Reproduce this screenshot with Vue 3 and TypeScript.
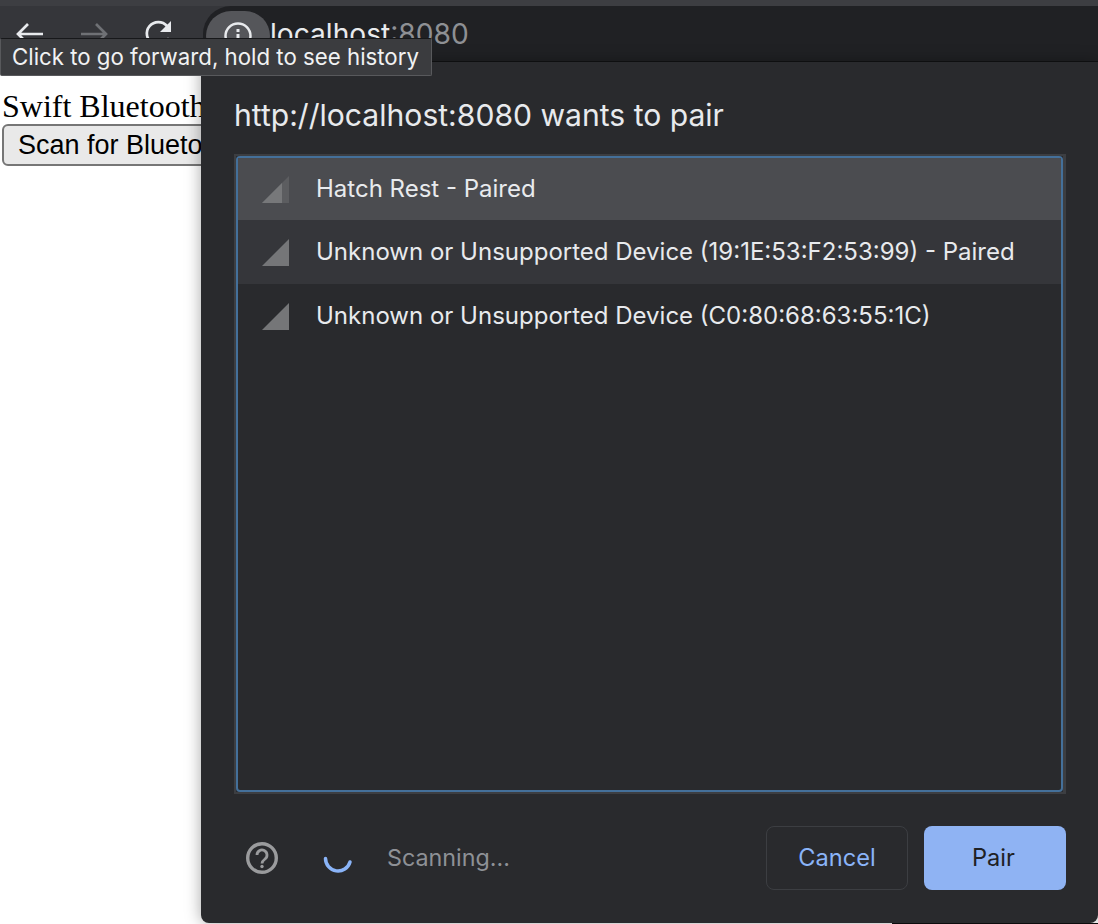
<script setup lang="ts">
const devices = [
  { name: 'Hatch Rest - Paired', cls: 'selected', weak: true },
  { name: 'Unknown or Unsupported Device (19:1E:53:F2:53:99) - Paired', cls: 'hover', weak: false },
  { name: 'Unknown or Unsupported Device (C0:80:68:63:55:1C)', cls: '', weak: false },
]
</script>

<template>
  <div class="window">
    <header class="toolbar">
      <div class="nav">
        <svg class="nav-icon" viewBox="0 0 32 32" width="32" height="32"><path d="M28 16H3M13 6 3 16l10 10" fill="none" stroke="#e8eaed" stroke-width="2.700"/></svg>
        <svg class="nav-icon" viewBox="0 0 32 32" width="32" height="32"><path d="M3 16h25M18 6l10 10-10 10" fill="none" stroke="#6f7175" stroke-width="2.700"/></svg>
        <svg class="nav-icon" viewBox="0 0 32 32" width="32" height="32"><path d="M26 20a11.500 11.500 0 1 1-2-12" fill="none" stroke="#e8eaed" stroke-width="2.700"/><path d="M28 3v11H17z" fill="#e8eaed"/></svg>
      </div>
      <div class="omnibox">
        <span class="info">
          <svg viewBox="0 0 32 32" width="32" height="32"><circle cx="16" cy="16" r="12.500" fill="none" stroke="#e8eaed" stroke-width="2.500"/><path d="M16 14v9M16 9v3" stroke="#e8eaed" stroke-width="3"/></svg>
        </span>
        <span class="host">localhost</span><span class="port">:8080</span>
      </div>
    </header>

    <main class="page">
      <div class="page-title">Swift Bluetooth Example</div>
      <button class="scan">Scan for Bluetooth Devices</button>
    </main>

    <div class="tooltip">Click to go forward, hold to see history</div>

    <section class="dialog">
      <h1 class="dialog-title">http://localhost:8080 wants to pair</h1>
      <div class="list-frame">
        <ul class="list">
          <li v-for="d in devices" :key="d.name" class="row" :class="d.cls">
            <svg class="signal" viewBox="0 0 27 27" width="27" height="27">
              <path v-if="d.weak" d="M27 0v27H0z" fill="#5c5d60"/>
              <path v-if="d.weak" d="M20 7v20H0z" fill="#77787a"/>
              <path v-else d="M27 0v27H0z" fill="#757678"/>
            </svg>
            <span>{{ d.name }}</span>
          </li>
        </ul>
      </div>
      <footer class="footer">
        <svg class="help" viewBox="0 0 32 32" width="32" height="32">
          <circle cx="16" cy="16" r="14.300" fill="none" stroke="#9a9b9d" stroke-width="3.400"/>
          <path d="M11 13a5 5 0 1 1 8 4c-2 1.500-3 2.500-3 4.500" fill="none" stroke="#9a9b9d" stroke-width="2.800"/>
          <circle cx="16" cy="24.500" r="1.700" fill="#9a9b9d"/>
        </svg>
        <svg class="spinner" viewBox="0 0 32 32" width="32" height="32">
          <path d="M3.500 16.500a12.500 12.500 0 0 0 24.500 3.500" fill="none" stroke="#8ab4f8" stroke-width="3.500" stroke-linecap="round"/>
        </svg>
        <span class="status">Scanning...</span>
        <button class="btn cancel">Cancel</button>
        <button class="btn pair">Pair</button>
      </footer>
    </section>
  </div>
</template>

<style scoped>
.window {
  position: relative;
  width: 1098px;
  height: 924px;
  overflow: hidden;
  background: #fff;
}
.toolbar {
  height: 62px;
  box-sizing: border-box;
  display: flex;
  background: #35363a;
  border-top: 6px solid #3d3e42;
  border-bottom: 1px solid #111214;
}
.nav {
  width: 203px;
  flex: none;
  display: flex;
  align-items: center;
  gap: 31px;
  padding-left: 15px;
  box-sizing: border-box;
}
.nav-icon {
  flex: none;
}
.nav-icon:last-child {
  margin-left: 2px;
}
.omnibox {
  flex: 1;
  display: flex;
  align-items: center;
  background: #202124;
  border-radius: 28px 0 0 0;
  font: 28.150px/1 "Inter", "Liberation Sans", sans-serif;
  padding-left: 3px;
  padding-top: 2px;
}
.info {
  width: 64px;
  height: 50px;
  margin-top: 2px;
  border-radius: 25px;
  background: #55565a;
  display: flex;
  align-items: center;
  justify-content: center;
  flex: none;
}
.host {
  color: #e8eaed;
}
.port {
  color: #8e9094;
}
.page {
  padding-top: 26px;
}
.page-title {
  font: 32px/36px "Liberation Serif", serif;
  color: #000;
  padding-left: 2px;
  white-space: nowrap;
}
.scan {
  display: block;
  margin-left: 2px;
  width: 300px;
  height: 42px;
  padding: 0 0 0 14px;
  text-align: left;
  border: 2px solid #767676;
  border-radius: 6px;
  background: #e9e9e9;
  font: 27px "Liberation Sans", sans-serif;
  color: #000;
  white-space: nowrap;
  overflow: hidden;
}
.tooltip {
  position: absolute;
  z-index: 3;
  left: 0;
  top: 38px;
  width: 432px;
  height: 38px;
  box-sizing: border-box;
  background: #3b3c3f;
  border: 1px solid #58595c;
  border-top-color: #17181a;
  border-radius: 2px;
  padding-left: 11px;
  font: 22.250px/36px "Inter", "Liberation Sans", sans-serif;
  color: #f1f2f3;
  white-space: nowrap;
}
.dialog {
  position: absolute;
  z-index: 2;
  left: 201px;
  top: 62px;
  width: 897px;
  height: 861px;
  box-sizing: border-box;
  padding: 0 32px 0 33px;
  background: #292a2d;
  border-radius: 0 0 8px 8px;
  box-shadow: 0 0 16px rgba(0, 0, 0, 0.35);
  display: flex;
  flex-direction: column;
}
.dialog::after {
  content: "";
  position: absolute;
  right: 0;
  bottom: -1px;
  width: 206px;
  height: 1px;
  background: #0c0c0d;
}
.dialog-title {
  margin: 0;
  height: 92px;
  font: 400 30.100px/107px "Inter", "Liberation Sans", sans-serif;
  color: #e8eaed;
  white-space: nowrap;
}
.list-frame {
  height: 640px;
  box-sizing: border-box;
  border: 2px solid #3c3e42;
  border-right-width: 3px;
  flex: none;
}
.list {
  list-style: none;
  margin: 0;
  padding: 0;
  height: 100%;
  box-sizing: border-box;
  border: 2px solid #44709a;
  border-radius: 4px;
}
.row {
  height: 64px;
  display: flex;
  align-items: center;
  padding-left: 24px;
  font: 24px "Inter", "Liberation Sans", sans-serif;
  color: #e8eaed;
  white-space: nowrap;
}
.row span {
  padding-bottom: 1px;
}
.row.selected {
  height: 62px;
  background: #4b4c50;
}
.row.hover {
  background: #35363a;
}
.signal {
  margin-right: 27px;
  flex: none;
}
.footer {
  flex: 1;
  display: flex;
  align-items: center;
  padding-bottom: 1px;
}
.help {
  margin-left: 12px;
  flex: none;
}
.spinner {
  margin-left: 44px;
  flex: none;
}
.status {
  margin-left: 33px;
  padding-bottom: 2px;
  font: 23.300px "Inter", "Liberation Sans", sans-serif;
  color: #8e9196;
  flex: 1;
}
.btn {
  width: 142px;
  height: 64px;
  padding: 0 0 2px;
  border-radius: 8px;
  font: 400 23.600px "Inter", "Liberation Sans", sans-serif;
  flex: none;
}
.cancel {
  background: transparent;
  border: 1px solid #3c3e42;
  color: #8ab4f8;
  margin-right: 16px;
}
.pair {
  background: #8fb3f3;
  border: 0;
  padding-right: 3px;
  color: #202124;
}
</style>
